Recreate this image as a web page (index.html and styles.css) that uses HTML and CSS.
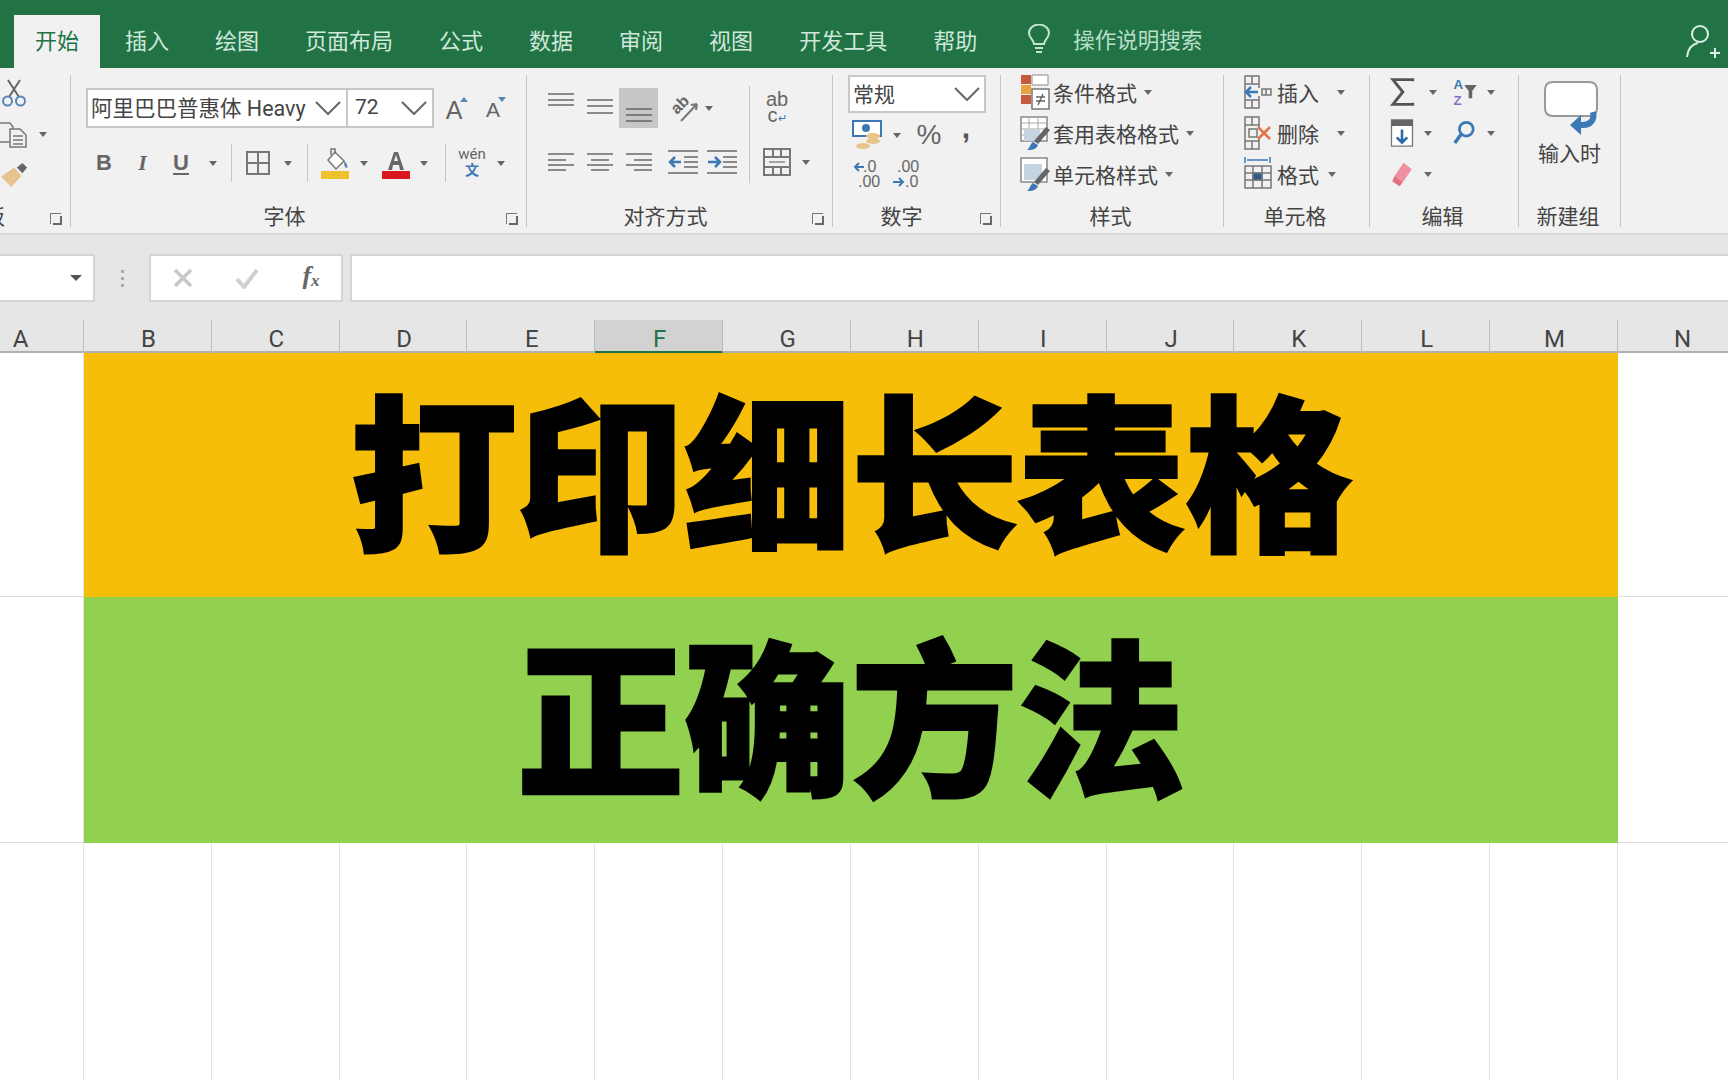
FILE: index.html
```html
<!DOCTYPE html>
<html lang="zh-CN">
<head>
  <meta charset="UTF-8" />
  <title>打印细长表格 - Excel</title>
  <link rel="stylesheet" href="styles.css">
</head>
<body>
  <div class="tabs">
    <div class="tab active">开始</div>
    <div class="tab">插入</div>
    <div class="tab">绘图</div>
    <div class="tab">页面布局</div>
    <div class="tab">公式</div>
    <div class="tab">数据</div>
    <div class="tab">审阅</div>
    <div class="tab">视图</div>
    <div class="tab">开发工具</div>
    <div class="tab">帮助</div>
    <svg class="bulb" width="24" height="30" viewBox="0 0 24 30" fill="none" stroke="#c4e4d2" stroke-width="2">
      <path d="M7 20c0-4-5-6-5-11a10 8.500 0 0 1 20 0c0 5-5 7-5 11z"/>
      <path d="M8 24h8M9 28h6"/>
    </svg>
    <div class="search">操作说明搜索</div>
    <svg class="person" width="36" height="34" viewBox="0 0 36 34" fill="none" stroke="#dcefe4" stroke-width="2">
      <circle cx="15" cy="10" r="8"/>
      <path d="M2 33c1-9 6-13 11-14M25 29h10M30 24v10"/>
    </svg>
  </div>

  <div class="ribbon">
    <!-- clipboard, cut off by the left edge -->
    <div class="group g-clip">
      <div class="clip-body">
        <div class="clip-row">
          <svg class="scissors" width="26" height="28" viewBox="0 0 26 28" fill="none" stroke-width="2">
            <path d="M7 1l11 17M19 1L8 18" stroke="#666"/>
            <circle cx="6.500" cy="22" r="4.500" stroke="#5a86b5"/>
            <circle cx="19.500" cy="22" r="4.500" stroke="#5a86b5"/>
          </svg>
        </div>
        <div class="clip-row">
          <svg width="28" height="26" viewBox="0 0 28 26" fill="none" stroke="#777" stroke-width="1.500">
            <path d="M-4 1h14l3 4v15H-4z"/>
            <path d="M10 7h10l6 6v12H10z" fill="#f1f1f1"/>
            <path d="M13 14h10M13 18h10M13 22h10"/>
          </svg>
          <span class="caret clip-caret"></span>
        </div>
        <div class="clip-row">
          <svg class="brush" width="28" height="26" viewBox="0 0 30 28">
            <path d="M0 16L14 6l8 9-11 12z" fill="#e6c48e"/>
            <path d="M17 6l6-5 5 5-5 6z" fill="#666"/>
          </svg>
        </div>
      </div>
      <div class="foot">
        <div class="label label-clip"><span>剪贴板</span></div>
        <span class="launcher"></span>
      </div>
    </div>

    <!-- font -->
    <div class="group g-font">
      <div class="body">
        <div class="font-row1">
          <div class="combo combo-name"><span>阿里巴巴普惠体 Heavy</span>
            <svg width="26" height="14" viewBox="0 0 26 14" fill="none" stroke="#666" stroke-width="2"><path d="M1 1l12 12L25 1"/></svg>
          </div>
          <div class="combo combo-size"><span>72</span>
            <svg width="26" height="14" viewBox="0 0 26 14" fill="none" stroke="#666" stroke-width="2"><path d="M1 1l12 12L25 1"/></svg>
          </div>
          <div class="btn size-a big">A<i class="tri-up"></i></div>
          <div class="btn size-a">A<i class="tri-down"></i></div>
        </div>
        <div class="font-row2">
          <div class="btn fmt b">B</div>
          <div class="btn fmt it">I</div>
          <div class="btn fmt un">U</div>
          <div class="btn"><span class="caret"></span></div>
          <div class="btn"><span class="vsep"></span></div>
          <div class="btn">
            <svg width="24" height="24" viewBox="0 0 24 24" fill="none" stroke="#777" stroke-width="2"><path d="M1 1h22v22H1zM12 1v22M1 12h22"/></svg>
          </div>
          <div class="btn"><span class="caret"></span></div>
          <div class="btn"><span class="vsep"></span></div>
          <div class="btn">
            <svg width="30" height="34" viewBox="0 0 30 34">
              <path d="M8 14l7-8 9 9-8 8z" fill="#fff" stroke="#777" stroke-width="1.500"/>
              <path d="M11 9V3h4v5" fill="none" stroke="#777" stroke-width="1.500"/>
              <path d="M24 15c3 2 4 5 3 7-2 0-3-2-3-7z" fill="#5a86b5"/>
              <rect x="1" y="25" width="28" height="8" fill="#eec22c"/>
            </svg>
          </div>
          <div class="btn"><span class="caret"></span></div>
          <div class="btn">
            <svg width="30" height="34" viewBox="0 0 30 34">
              <path d="M7 24L13 6h4l6 18h-4l-1-5h-6l-1 5zM13 15h4l-2-6z" fill="#666"/>
              <rect x="1" y="25" width="28" height="8" fill="#d8161c"/>
            </svg>
          </div>
          <div class="btn"><span class="caret"></span></div>
          <div class="btn"><span class="vsep"></span></div>
          <div class="btn wen"><span class="wen-top">wén</span><span class="wen-bot">文</span></div>
          <div class="btn"><span class="caret"></span></div>
        </div>
      </div>
      <div class="foot">
        <div class="label">字体</div>
        <span class="launcher"></span>
      </div>
    </div>

    <!-- alignment -->
    <div class="group g-align">
      <div class="body align-body">
        <div class="align-left">
          <div class="align-row1">
            <div class="btn">
              <svg width="26" height="40" viewBox="0 0 26 40" stroke="#8a8a8a" stroke-width="2"><path d="M0 6h26M0 12h26M0 17h26"/></svg>
            </div>
            <div class="btn">
              <svg width="26" height="40" viewBox="0 0 26 40" stroke="#8a8a8a" stroke-width="2"><path d="M0 12h26M0 18h26M0 25h26"/></svg>
            </div>
            <div class="btn on">
              <svg width="26" height="40" viewBox="0 0 26 40" stroke="#7d7d7d" stroke-width="2"><path d="M0 21h26M0 27h26M0 33h26"/></svg>
            </div>
            <span></span>
            <div class="btn">
              <svg width="30" height="30" viewBox="0 0 30 30" fill="none">
                <text x="9" y="22" transform="rotate(-45 9 22)" class="ab-rot">ab</text>
                <path d="M13 28L29 11M29 11l-6 1M29 11l-1 6" stroke="#777" stroke-width="2"/>
              </svg>
            </div>
            <div class="btn"><span class="caret"></span></div>
          </div>
          <div class="align-row2">
            <div class="btn">
              <svg width="26" height="20" viewBox="0 0 26 20" stroke="#8a8a8a" stroke-width="2"><path d="M0 2h26M0 8h18M0 13h26M0 18h18"/></svg>
            </div>
            <div class="btn">
              <svg width="26" height="20" viewBox="0 0 26 20" stroke="#8a8a8a" stroke-width="2"><path d="M0 2h26M4 8h18M0 13h26M4 18h18"/></svg>
            </div>
            <div class="btn">
              <svg width="26" height="20" viewBox="0 0 26 20" stroke="#8a8a8a" stroke-width="2"><path d="M0 2h26M8 8h18M0 13h26M8 18h18"/></svg>
            </div>
            <span></span>
            <div class="btn">
              <svg width="30" height="24" viewBox="0 0 30 24" fill="none" stroke="#8a8a8a" stroke-width="2">
                <path d="M0 1h30M16 7h14M16 12h14M16 17h14M0 23h30"/>
                <path d="M13 12H2M7 7l-5 5 5 5" stroke="#3c78b5" stroke-width="2.500"/>
              </svg>
            </div>
            <span></span>
            <div class="btn">
              <svg width="30" height="24" viewBox="0 0 30 24" fill="none" stroke="#8a8a8a" stroke-width="2">
                <path d="M0 1h30M16 7h14M16 12h14M16 17h14M0 23h30"/>
                <path d="M1 12h11M8 7l5 5-5 5" stroke="#3c78b5" stroke-width="2.500"/>
              </svg>
            </div>
          </div>
        </div>
        <span class="vsep tall"></span>
        <div class="align-right">
          <div class="btn wrap-ic"><span>ab</span><span>c<i>↵</i></span></div>
          <span></span>
          <div class="btn">
            <svg width="28" height="28" viewBox="0 0 28 28" fill="none" stroke="#777" stroke-width="2">
              <path d="M1 1h26v26H1zM1 9h26M1 19h26M10 1v8M18 1v8M10 19v8M18 19v8"/>
              <path d="M6 14h16" stroke="#888" stroke-width="1.500"/>
            </svg>
          </div>
          <div class="btn"><span class="caret"></span></div>
        </div>
      </div>
      <div class="foot">
        <div class="label">对齐方式</div>
        <span class="launcher"></span>
      </div>
    </div>

    <!-- number -->
    <div class="group g-num">
      <div class="num-body">
        <div class="combo combo-fmt"><span>常规</span>
          <svg width="26" height="14" viewBox="0 0 26 14" fill="none" stroke="#666" stroke-width="2"><path d="M1 1l12 12L25 1"/></svg>
        </div>
        <div class="num-row2">
          <div class="btn">
            <svg width="30" height="30" viewBox="0 0 30 30">
              <path d="M1 1h28v15H1z" fill="#fff" stroke="#3c78b5" stroke-width="2"/>
              <circle cx="14" cy="8" r="4" fill="#3c78b5"/>
              <ellipse cx="21" cy="16" rx="7" ry="3" fill="#e8c68a"/>
              <ellipse cx="21" cy="21" rx="7" ry="3" fill="#e8c68a"/>
              <ellipse cx="11" cy="26" rx="7" ry="3" fill="#e8c68a"/>
            </svg>
          </div>
          <div class="btn"><span class="caret"></span></div>
          <div class="btn pct">%</div>
          <div class="btn comma">,</div>
        </div>
        <div class="num-row3">
          <div class="btn">
            <svg width="28" height="30" viewBox="0 0 28 30">
              <text x="10" y="13" class="dec">.0</text>
              <text x="5" y="28" class="dec">.00</text>
              <path d="M11 8H2M6 4L2 8l4 4" fill="none" stroke="#3c78b5" stroke-width="2"/>
            </svg>
          </div>
          <div class="btn">
            <svg width="28" height="30" viewBox="0 0 28 30">
              <text x="5" y="13" class="dec">.00</text>
              <text x="13" y="28" class="dec">.0</text>
              <path d="M1 23h10M7 19l4 4-4 4" fill="none" stroke="#3c78b5" stroke-width="2"/>
            </svg>
          </div>
        </div>
      </div>
      <div class="foot">
        <div class="label">数字</div>
        <span class="launcher"></span>
      </div>
    </div>

    <!-- styles -->
    <div class="group g-style">
      <div class="list-body">
        <div class="list-row">
          <svg width="30" height="36" viewBox="0 0 30 36">
            <rect x="1" y="1" width="10" height="9" fill="#c55a3c"/>
            <rect x="1" y="11" width="10" height="9" fill="#e8a33c"/>
            <rect x="1" y="21" width="10" height="9" fill="#c55a3c"/>
            <path d="M12 1h16v10H12z" fill="#fff" stroke="#888"/>
            <path d="M12 15h17v20H12z" fill="#fff" stroke="#777" stroke-width="1.500"/>
            <path d="M16 23h9M16 27h9M23 20l-5 11" stroke="#666" stroke-width="1.500"/>
          </svg>
          <span>条件格式</span><span class="caret c-tight"></span>
        </div>
        <div class="list-row">
          <svg width="30" height="36" viewBox="0 0 30 36">
            <path d="M1 2h26v24H1z" fill="#fff" stroke="#888" stroke-width="1.500"/>
            <path d="M1 8h26M1 14h26M1 20h26M9 2v24M18 2v24" stroke="#aaa"/>
            <path d="M4 14h16v12H4z" fill="#c6d4e2"/>
            <path d="M26 12l4 3-12 14-4-3z" fill="#666"/>
            <path d="M13 27l5 3c-2 5-7 5-11 5 3-2 3-6 6-8z" fill="#3c78b5"/>
          </svg>
          <span>套用表格格式</span><span class="caret c-tight"></span>
        </div>
        <div class="list-row">
          <svg width="30" height="36" viewBox="0 0 30 36">
            <path d="M1 2h26v24H1z" fill="#fff" stroke="#888" stroke-width="1.500"/>
            <path d="M4 8h18v16H4z" fill="#c6d4e2"/>
            <path d="M26 12l4 3-12 14-4-3z" fill="#666"/>
            <path d="M13 27l5 3c-2 5-7 5-11 5 3-2 3-6 6-8z" fill="#3c78b5"/>
          </svg>
          <span>单元格样式</span><span class="caret c-tight"></span>
        </div>
      </div>
      <div class="foot"><div class="label label-plain">样式</div></div>
    </div>

    <!-- cells -->
    <div class="group g-cells">
      <div class="list-body">
        <div class="list-row">
          <svg width="28" height="36" viewBox="0 0 28 36" fill="none" stroke="#777" stroke-width="1.500">
            <path d="M1 2h14v8H1zM8 2v8M1 26h14v8H1zM8 26v8M1 10v16M15 10v4M15 22v4M18 15h9v6h-9zM22 15v6"/>
            <path d="M14 18H3M7 13l-5 5 5 5" stroke="#3c78b5" stroke-width="2.500"/>
          </svg>
          <span>插入</span><span class="caret c-wide"></span>
        </div>
        <div class="list-row">
          <svg width="28" height="36" viewBox="0 0 28 36" fill="none" stroke="#777" stroke-width="1.500">
            <path d="M1 2h14v8H1zM8 2v8M1 26h14v8H1zM8 26v8M1 10v16M15 10v4M15 22v4M5 14h8v8H5z"/>
            <path d="M14 12l12 12M26 12L14 24" stroke="#e2734a" stroke-width="2.500"/>
          </svg>
          <span>删除</span><span class="caret c-wide"></span>
        </div>
        <div class="list-row">
          <svg width="28" height="36" viewBox="0 0 28 36" fill="none" stroke="#777" stroke-width="1.500">
            <path d="M1 1v6M26 1v6M3 4h21" stroke="#3c78b5"/>
            <path d="M1 10h26v22H1zM1 17h26M1 24h26M9 10v22M18 10v22"/>
            <rect x="9" y="17" width="9" height="7" fill="#2f5b8a"/>
          </svg>
          <span>格式</span><span class="caret c-tight"></span>
        </div>
      </div>
      <div class="foot"><div class="label label-plain">单元格</div></div>
    </div>

    <!-- editing -->
    <div class="group g-edit">
      <div class="list-body">
        <div class="edit-row1">
          <div class="btn">
            <svg width="26" height="28" viewBox="0 0 28 34" fill="none" stroke="#555" stroke-width="3.500"><path d="M27 4V2H3l12 15L3 32h24v-2"/></svg>
          </div>
          <div class="btn"><span class="caret"></span></div>
          <div class="btn az">
            <svg width="30" height="32" viewBox="0 0 30 36">
              <text x="1" y="15" class="az-a">A</text>
              <text x="1" y="33" class="az-z">Z</text>
              <path d="M13 10h14l-5 7v8h-4v-8z" fill="#666"/>
            </svg>
          </div>
          <div class="btn"><span class="caret"></span></div>
        </div>
        <div class="edit-row2">
          <div class="btn">
            <svg width="24" height="28" viewBox="0 0 26 32">
              <path d="M1 1h24v30H1z" fill="#fff" stroke="#777" stroke-width="1.500"/>
              <rect x="1" y="1" width="24" height="7" fill="#666"/>
              <path d="M13 12v15M7 21l6 6 6-6" fill="none" stroke="#2f6aa8" stroke-width="3"/>
            </svg>
          </div>
          <div class="btn"><span class="caret"></span></div>
          <span></span>
          <div class="btn">
            <svg width="24" height="26" viewBox="0 0 30 34" fill="none" stroke="#3c78b5" stroke-width="3.500">
              <circle cx="18" cy="12" r="9"/>
              <path d="M11 19L3 30" stroke-width="4.500"/>
            </svg>
          </div>
          <div class="btn"><span class="caret"></span></div>
        </div>
        <div class="edit-row3">
          <div class="btn">
            <svg width="22" height="26" viewBox="0 0 26 32">
              <path d="M15 2l10 8-11 16-10-8z" fill="#ef8f9f"/>
              <path d="M4 18l10 8-4 5-9-6z" fill="#e76f83"/>
            </svg>
          </div>
          <div class="btn"><span class="caret"></span></div>
        </div>
      </div>
      <div class="foot"><div class="label label-plain">编辑</div></div>
    </div>

    <!-- custom group -->
    <div class="group g-new">
      <div class="new-body">
        <svg width="60" height="58" viewBox="0 0 60 58">
          <path d="M10 2h36c5 0 8 3 8 8v18c0 5-3 8-8 8H36l-5 0H10c-5 0-8-3-8-8V10c0-5 3-8 8-8z" fill="#fff" stroke="#999" stroke-width="2"/>
          <path d="M50 32c2 8-3 13-10 13h-8" fill="none" stroke="#3c78b5" stroke-width="6"/>
          <path d="M38 35L27 45l11 10z" fill="#3c78b5"/>
        </svg>
        <div class="new-text">输入时</div>
      </div>
      <div class="foot"><div class="label label-plain">新建组</div></div>
    </div>
  </div>

  <div class="formula">
    <div class="fbox name-box"><span class="caret"></span></div>
    <div class="dots"><i></i><i></i><i></i></div>
    <div class="fbox fn-box">
      <svg width="22" height="22" viewBox="0 0 22 22" stroke="#c8c8c8" stroke-width="3.500"><path d="M3 3l16 16M19 3L3 19"/></svg>
      <svg width="26" height="22" viewBox="0 0 26 22" fill="none" stroke="#cfcfcf" stroke-width="4"><path d="M3 12l7 8L23 3"/></svg>
      <span class="fx">f<sub>x</sub></span>
    </div>
    <div class="fbox input-box"></div>
  </div>

  <div class="col-head">
    <div class="hc hc-a">A</div>
    <div class="hc">B</div>
    <div class="hc">C</div>
    <div class="hc">D</div>
    <div class="hc">E</div>
    <div class="hc hc-on">F</div>
    <div class="hc">G</div>
    <div class="hc">H</div>
    <div class="hc">I</div>
    <div class="hc">J</div>
    <div class="hc">K</div>
    <div class="hc">L</div>
    <div class="hc">M</div>
    <div class="hc">N</div>
  </div>

  <div class="sheet">
    <div class="sheet-row r1">
      <div class="cell"></div>
      <div class="banner yellow">打印细长表格</div>
      <div class="cell"></div>
    </div>
    <div class="sheet-row r2">
      <div class="cell"></div>
      <div class="banner green">正确方法</div>
      <div class="cell"></div>
    </div>
    <div class="sheet-row r3">
      <div class="cell"></div><div class="cell"></div><div class="cell"></div><div class="cell"></div><div class="cell"></div>
      <div class="cell"></div><div class="cell"></div><div class="cell"></div><div class="cell"></div><div class="cell"></div>
      <div class="cell"></div><div class="cell"></div><div class="cell"></div><div class="cell"></div>
    </div>
  </div>
</body>
</html>
```

FILE: styles.css
```css
html, body {
  margin: 0;
  height: 100%;
  overflow: hidden;
}

body {
  font-family: "Noto Sans CJK SC", Roboto, sans-serif;
  background: #fff;
  color: #444;
  font-size: 21px;
}

svg {
  display: block;
  flex: none;
}

/* tab bar */
.tabs {
  display: flex;
  align-items: flex-end;
  height: 68px;
  padding-left: 14px;
  gap: 4px;
  background: #217346;
  box-sizing: border-box;
}

.tab {
  height: 53px;
  line-height: 48px;
  padding: 0 21px;
  font-size: 22px;
  color: #cfe8d9;
  white-space: nowrap;
}

.tab.active {
  background: #f1f1f1;
  color: #217346;
}

.bulb {
  margin: 0 0 14px 25px;
}

.search {
  height: 53px;
  line-height: 48px;
  margin-left: 18px;
  font-size: 21.500px;
  color: #b9dfc9;
}

.person {
  margin: 0 7px 10px auto;
}

/* ribbon */
.ribbon {
  display: flex;
  height: 165px;
  padding-top: 7px;
  box-sizing: border-box;
  background: #f1f1f1;
  overflow: hidden;
}

.group {
  display: flex;
  flex-direction: column;
  height: 152px;
  box-sizing: border-box;
  border-right: 1px solid #c6c6c6;
}

.g-clip { width: 71px; }
.g-font { width: 456px; }
.g-align { width: 306px; }
.g-num { width: 168px; }
.g-style { width: 223px; }
.g-cells { width: 146px; }
.g-edit { width: 149px; }
.g-new { width: 102px; }

.body {
  height: 131px;
  padding: 13px 0 0 15px;
  box-sizing: border-box;
}

.foot {
  display: flex;
  align-items: center;
  height: 19px;
}

.label {
  flex: 1;
  padding-right: 8px;
  line-height: 19px;
  text-align: center;
  color: #444;
  white-space: nowrap;
}

.label-plain {
  padding-right: 3px;
}

.g-num .label {
  padding-right: 10px;
}

.label-clip {
  display: flex;
  flex: none;
  width: 5px;
  padding: 0;
  justify-content: flex-end;
  margin-right: auto;
}

.launcher {
  position: relative;
  width: 11px;
  height: 11px;
  margin: 5px 9px 0 0;
  border-left: 1px solid #777;
  border-top: 1px solid #777;
  box-sizing: border-box;
}

.launcher::after {
  content: "";
  position: absolute;
  right: -1px;
  bottom: -1px;
  width: 7px;
  height: 7px;
  border-right: 2px solid #666;
  border-bottom: 2px solid #666;
}

.btn {
  display: flex;
  align-items: center;
  justify-content: center;
  min-width: 0;
}

.on {
  background: #c6c6c6;
}

.caret {
  display: block;
  width: 0;
  height: 0;
  border-left: 4.5px solid transparent;
  border-right: 4.5px solid transparent;
  border-top: 5px solid #666;
  flex: none;
}

.vsep {
  display: block;
  width: 1px;
  height: 38px;
  background: #c6c6c6;
}

.vsep.tall {
  height: 97px;
  margin-top: -2px;
}

/* clipboard */
.clip-body {
  height: 131px;
}

.clip-row {
  display: flex;
  align-items: center;
  height: 39px;
  margin-bottom: 1px;
}

.scissors {
  margin: -3px 0 0 1px;
}

.brush {
  margin-left: 1px;
}

.clip-caret {
  margin-left: 11px;
}

/* font */
.font-row1 {
  display: grid;
  grid-template-columns: 262px 86px 40px 38px;
  height: 40px;
}

.combo {
  display: flex;
  align-items: center;
  justify-content: space-between;
  background: #fff;
  border: 2px solid #c8c8c8;
  box-sizing: border-box;
  padding: 0 5px;
  color: #444;
  white-space: nowrap;
}

.combo-name span,
.combo-size span {
  font-family: Roboto, "Noto Sans CJK SC", sans-serif;
  margin-bottom: 3px;
}

.combo-name {
  font-size: 21.500px;
  padding-left: 3px;
}

.combo-size {
  padding-left: 7px;
  border-left: 0;
}

.size-a {
  position: relative;
  font-family: "Liberation Sans", sans-serif;
  font-size: 21px;
  color: #666;
  padding-top: 4px;
}

.size-a.big {
  font-size: 25px;
}

.tri-up,
.tri-down {
  position: absolute;
  top: 9px;
  right: 6px;
  width: 0;
  height: 0;
  border-left: 4px solid transparent;
  border-right: 4px solid transparent;
}

.tri-up {
  border-bottom: 5px solid #5a86b5;
}

.tri-down {
  border-top: 5px solid #5a86b5;
}

.font-row2 {
  display: grid;
  grid-template-columns: 36px 41px 36px 27px 10px 44px 16px 22px 34px 24px 40px 16px 26px 28px 30px;
  height: 40px;
  margin-top: 15px;
}

.fmt {
  font-family: "Liberation Serif", serif;
  font-size: 22px;
  color: #666;
}

.fmt.b {
  font-family: "Liberation Sans", sans-serif;
  font-weight: 700;
}

.fmt.it {
  font-style: italic;
  font-weight: 700;
}

.fmt.un {
  font-family: "Liberation Sans", sans-serif;
  font-weight: 700;
  text-decoration: underline;
  text-underline-offset: 3px;
}

.wen {
  flex-direction: column;
  margin-top: -3px;
}

.wen-top {
  height: 15px;
  font-family: Roboto, sans-serif;
  font-size: 15px;
  line-height: 15px;
  color: #666;
}

.wen-bot {
  height: 15px;
  font-size: 14px;
  line-height: 15px;
  font-weight: 700;
  color: #3c78b5;
}

/* alignment */
.align-body {
  display: flex;
}

.align-left {
  width: 207px;
  flex: none;
}

.align-row1 {
  display: grid;
  grid-template-columns: 38px 39px 39px 6px 38px 14px;
  height: 40px;
}

.align-row2 {
  display: grid;
  grid-template-columns: 38px 39px 39px 6px 38px 1px 38px;
  height: 40px;
  margin-top: 14px;
}

.ab-rot {
  font-family: "Liberation Sans", sans-serif;
  font-size: 16px;
  font-weight: 700;
  fill: #666;
}

.align-right {
  display: grid;
  grid-template-columns: 42px 16px;
  grid-template-rows: 40px 40px;
  row-gap: 14px;
  margin-left: 6px;
}

.wrap-ic {
  flex-direction: column;
  font-family: "Liberation Sans", sans-serif;
  font-size: 20px;
  line-height: 16px;
  color: #666;
}

.wrap-ic i {
  font-style: normal;
  font-size: 11px;
  color: #3c78b5;
}

/* number */
.num-body {
  height: 131px;
  padding-left: 15px;
  box-sizing: border-box;
}

.combo-fmt {
  width: 138px;
  height: 38px;
  padding: 0 4px 3px 3px;
}

.combo-fmt svg {
  margin-top: 3px;
}

.num-row2 {
  display: grid;
  grid-template-columns: 38px 22px 42px 32px;
  height: 38px;
  margin-top: 3px;
}

.num-row3 {
  display: grid;
  grid-template-columns: 38px 40px;
  height: 38px;
  margin-top: 1px;
}

.pct {
  font-family: "Liberation Sans", sans-serif;
  font-size: 28px;
  color: #666;
}

.comma {
  font-family: "Liberation Sans", sans-serif;
  font-size: 30px;
  font-weight: 700;
  line-height: 20px;
  color: #555;
  padding-bottom: 14px;
  box-sizing: border-box;
}

.dec {
  font-family: "Liberation Sans", sans-serif;
  font-size: 16px;
  fill: #666;
}

/* styles and cells lists */
.list-body {
  display: flex;
  flex-direction: column;
  gap: 5px;
  height: 131px;
  margin-top: -1px;
  padding-bottom: 1px;
  box-sizing: content-box;
}

.list-row {
  display: flex;
  align-items: center;
  height: 36px;
  color: #444;
  white-space: nowrap;
}

.g-style .list-row {
  padding-left: 19px;
  gap: 3px;
}

.g-cells .list-row {
  padding-left: 20px;
  gap: 5px;
}

.c-tight {
  margin-left: 4px;
}

.c-wide {
  margin-left: 13px;
}

/* editing */
.edit-row1 {
  display: grid;
  grid-template-columns: 34px 28px 38px 12px;
  height: 36px;
  padding-left: 15px;
}

.edit-row2 {
  display: grid;
  grid-template-columns: 34px 18px 10px 34px 20px;
  height: 36px;
  padding-left: 15px;
}

.edit-row3 {
  display: grid;
  grid-template-columns: 34px 18px;
  height: 36px;
  padding-left: 15px;
}

.az-a,
.az-z {
  font-family: "Liberation Sans", sans-serif;
  font-size: 15px;
  font-weight: 700;
}

.az-a {
  fill: #3c78b5;
}

.az-z {
  fill: #8a6fc0;
}

/* custom group */
.new-body {
  display: flex;
  flex-direction: column;
  align-items: center;
  height: 131px;
  padding-top: 5px;
  padding-left: 6px;
  box-sizing: border-box;
}

.new-text {
  margin: 0 6px 0 0;
  line-height: 28px;
  color: #444;
}

/* formula bar */
.formula {
  display: flex;
  align-items: flex-start;
  height: 87px;
  padding-top: 19px;
  box-sizing: border-box;
  background: #e6e6e6;
  border-top: 2px solid #d8d8d8;
}

.fbox {
  height: 48px;
  background: #fff;
  border: 2px solid #d4d4d4;
  box-sizing: border-box;
}

.name-box {
  display: flex;
  align-items: center;
  justify-content: flex-end;
  width: 95px;
  padding-right: 11px;
  border-left: 0;
}

.name-box .caret {
  border-left-width: 6px;
  border-right-width: 6px;
  border-top: 6px solid #555;
}

.dots {
  display: flex;
  flex-direction: column;
  gap: 4px;
  width: 55px;
  height: 48px;
  align-items: center;
  justify-content: center;
}

.dots i {
  width: 3px;
  height: 3px;
  background: #aaa;
}

.fn-box {
  display: grid;
  grid-template-columns: repeat(3, 64px);
  justify-items: center;
  align-items: center;
  width: 194px;
  margin-left: -1px;
  margin-right: 1px;
}

.fx {
  font-family: "Liberation Serif", serif;
  font-style: italic;
  font-size: 26px;
  line-height: 30px;
  font-weight: 700;
  color: #666;
}

.fx sub {
  font-size: 17px;
  vertical-align: -2px;
}

.input-box {
  flex: 1;
  margin-left: 6px;
  border-right: 0;
}

/* column headers */
.col-head {
  display: grid;
  grid-template-columns: 84px repeat(12, 127.83px) 128px;
  height: 33px;
  background: #e6e6e6;
  border-bottom: 2px solid #b0b0b0;
  box-sizing: border-box;
}

.hc {
  padding: 6px 0 0 2px;
  font-family: Roboto, sans-serif;
  font-size: 24px;
  line-height: 26px;
  text-align: center;
  color: #444;
  border-right: 1px solid #bdbdbd;
  box-sizing: border-box;
  overflow: hidden;
}

.hc-a {
  padding: 6px 42px 0 0;
}

.hc-on {
  background: #d2d2d2;
  color: #217346;
  border-bottom: 2px solid #217346;
  height: 33px;
}

/* sheet */
.sheet-row {
  display: grid;
  grid-template-columns: 84px repeat(12, 127.83px) 128px;
}

.r1 {
  height: 244px;
}

.r2 {
  height: 246px;
}

.r3 {
  height: 240px;
}

.cell {
  box-sizing: border-box;
  border-right: 1px solid #e2e2e2;
  border-bottom: 1px solid #dcdcdc;
}

.banner {
  grid-column: span 12;
  display: flex;
  align-items: center;
  justify-content: center;
  padding-bottom: 20px;
  box-sizing: border-box;
  font-family: "Noto Sans CJK SC", sans-serif;
  font-size: 167px;
  font-weight: 900;
  line-height: 1;
  color: #000;
  -webkit-text-stroke: 3px #000;
  white-space: nowrap;
}

.yellow {
  background: #f6be08;
}

.green {
  background: #92d050;
}
```
